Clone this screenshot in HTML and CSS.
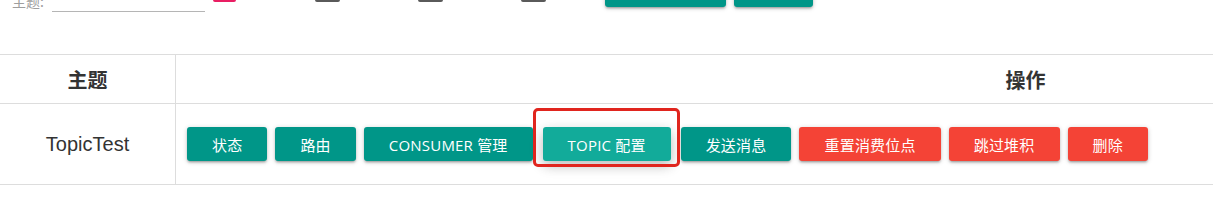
FILE: index.html
```html
<!DOCTYPE html>
<html lang="zh">
<head>
    <meta charset="UTF-8">
    <title>Topic</title>
    <link rel="stylesheet" href="styles.css">
</head>
<body>
    <div class="search-bar">
        <label class="search-label">主题:</label>
        <input type="text" class="search-input">
        <span class="check checked"></span>
        <span class="check first"></span>
        <span class="check"></span>
        <span class="check"></span>
        <button class="btn top-btn wide">ADD/ UPDATE</button>
        <button class="btn top-btn narrow">REFRESH</button>
    </div>

    <table class="topic-table">
        <thead>
            <tr>
                <th class="name-col">主题</th>
                <th>操作</th>
            </tr>
        </thead>
        <tbody>
            <tr>
                <td class="name-col">TopicTest</td>
                <td class="actions-cell">
                    <div class="actions">
                        <button class="btn">状态</button>
                        <button class="btn">路由</button>
                        <button class="btn">CONSUMER 管理</button>
                        <button class="btn active">TOPIC 配置</button>
                        <button class="btn">发送消息</button>
                        <button class="btn red">重置消费位点</button>
                        <button class="btn red">跳过堆积</button>
                        <button class="btn red">删除</button>
                    </div>
                </td>
            </tr>
        </tbody>
    </table>
</body>
</html>
```
FILE: styles.css
```css
html, body {
    overflow: hidden;
}
body {
    margin: 0;
    background-color: white;
    font-family: "Liberation Sans", Arial, "Noto Sans CJK SC", sans-serif;
    color: #333;
}
.search-bar {
    display: flex;
    align-items: flex-start;
    height: 44px;
    margin-top: -30px;
    padding-left: 12px;
}
.search-label {
    width: 40px;
    margin-top: 22px;
    font-size: 14px;
    line-height: 18px;
    color: #9e9e9e;
    font-family: "Noto Sans CJK SC", sans-serif;
}
.search-input {
    width: 153px;
    height: 41px;
    padding: 0;
    border: none;
    border-bottom: 1px solid #b5b5b5;
    outline: none;
    box-sizing: content-box;
}
.check {
    width: 25px;
    height: 18px;
    margin-top: 14px;
    margin-left: 78px;
    border: 2px solid #5a5a5a;
    border-radius: 2px;
    box-sizing: border-box;
}
.check.checked {
    width: 23px;
    margin-left: 8px;
    border-color: #e91e63;
    background-color: #e91e63;
}
.check.first {
    margin-left: 79px;
}
.btn {
    height: 34px;
    padding: 0 25px;
    border: none;
    border-radius: 3px;
    background-color: #009688;
    color: white;
    font-family: "Open Sans", "Noto Sans CJK SC", sans-serif;
    font-size: 15px;
    letter-spacing: 0.2px;
    white-space: nowrap;
    cursor: pointer;
    box-shadow: 0 2px 2px 0 rgba(0, 0, 0, 0.14), 0 3px 1px -2px rgba(0, 0, 0, 0.12), 0 1px 5px 0 rgba(0, 0, 0, 0.2);
}
.btn.red {
    background-color: #f44336;
}
.btn.active {
    position: relative;
    margin: 0 2px;
    background-color: #12ab9a;
    box-shadow: 0 5px 11px 0 rgba(0, 0, 0, 0.16), 0 4px 15px 0 rgba(0, 0, 0, 0.13);
}
.btn.active::after {
    content: "";
    position: absolute;
    top: -19px;
    bottom: -6px;
    left: -10px;
    right: -9px;
    border: 3px solid #e0251e;
    border-radius: 5px;
}
.top-btn {
    margin-top: 3px;
    padding: 0;
}
.top-btn.wide {
    width: 121px;
    margin-left: 59px;
}
.top-btn.narrow {
    width: 79px;
    margin-left: 8px;
}
.topic-table {
    width: 1875px;
    margin-top: 40px;
    border-collapse: collapse;
    border-top: 1px solid #ddd;
}
.topic-table th,
.topic-table td {
    border-bottom: 1px solid #ddd;
    padding: 0;
    text-align: center;
}
.topic-table th {
    height: 48px;
    font-size: 20px;
    font-family: "Noto Sans CJK SC", sans-serif;
    font-weight: bold;
    color: #333;
}
.topic-table td {
    height: 80px;
    font-size: 20px;
}
.name-col {
    width: 175px;
    border-right: 1px solid #ddd;
}
.topic-table td.actions-cell {
    text-align: left;
    padding-left: 11px;
}
.actions {
    display: flex;
    gap: 8px;
}
```
